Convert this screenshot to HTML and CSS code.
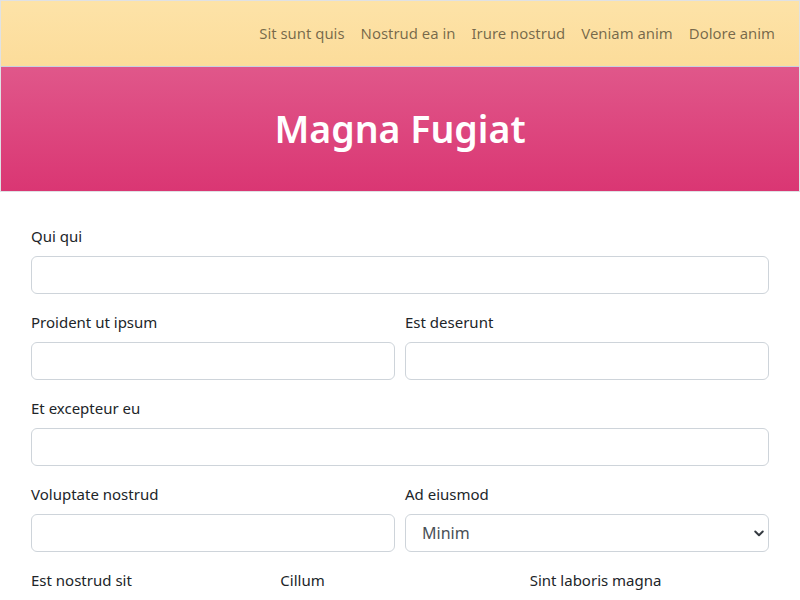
FILE: index.html
```html
<!DOCTYPE html>
<html lang="en">
<head>
<meta charset="utf-8">
<title>Magna Fugiat</title>
<link rel="stylesheet" href="styles.css">
</head>
<body>
<header class="top">
  <nav class="navbar">
    <ul class="nav">
      <li><a class="nav-link" href="#">Sit sunt quis</a></li>
      <li><a class="nav-link" href="#">Nostrud ea in</a></li>
      <li><a class="nav-link" href="#">Irure nostrud</a></li>
      <li><a class="nav-link" href="#">Veniam anim</a></li>
      <li><a class="nav-link" href="#">Dolore anim</a></li>
    </ul>
  </nav>
  <section class="hero">
    <h1 class="hero-title">Magna Fugiat</h1>
  </section>
</header>
<main class="content">
  <form class="form">
    <div class="field">
      <label class="label" for="f1">Qui qui</label>
      <input class="control" id="f1" type="text">
    </div>
    <div class="row two">
      <div class="field">
        <label class="label" for="f2">Proident ut ipsum</label>
        <input class="control" id="f2" type="text">
      </div>
      <div class="field">
        <label class="label" for="f3">Est deserunt</label>
        <input class="control" id="f3" type="text">
      </div>
    </div>
    <div class="field">
      <label class="label" for="f4">Et excepteur eu</label>
      <input class="control" id="f4" type="text">
    </div>
    <div class="row two">
      <div class="field">
        <label class="label" for="f5">Voluptate nostrud</label>
        <input class="control" id="f5" type="text">
      </div>
      <div class="field">
        <label class="label" for="f6">Ad eiusmod</label>
        <div class="select-wrap">
          <select class="control select" id="f6">
            <option>Minim</option>
          </select>
          <svg class="chev" viewBox="0 0 16 16" width="16" height="16" aria-hidden="true"><path d="M3 6l5 5 5-5" fill="none" stroke="#343a40" stroke-width="2.6" stroke-linecap="round" stroke-linejoin="round"/></svg>
        </div>
      </div>
    </div>
    <div class="row three">
      <div class="field">
        <label class="label" for="f7">Est nostrud sit</label>
        <input class="control" id="f7" type="text">
      </div>
      <div class="field">
        <label class="label" for="f8">Cillum</label>
        <input class="control" id="f8" type="text">
      </div>
      <div class="field">
        <label class="label" for="f9">Sint laboris magna</label>
        <input class="control" id="f9" type="text">
      </div>
    </div>
  </form>
</main>
</body>
</html>
```
FILE: styles.css
```css
* { box-sizing: border-box; }
html, body { margin: 0; padding: 0; }
body {
  font-family: "Noto Sans", "Open Sans", sans-serif;
  font-size: 15px;
  color: #212529;
  background: #fff;
}
.top {
  border: 1px solid #dfe1e4;
  border-bottom: none;
}
.navbar {
  background: linear-gradient(to bottom, #fde3a8, #fcdc9a);
  border-bottom: 1px solid #c9d0e0;
  padding: 12px 16px 13px;
  display: flex;
  justify-content: flex-end;
}
.nav {
  list-style: none;
  margin: 0;
  padding: 0;
  display: flex;
}
.nav-link {
  display: block;
  padding: 8px 8px;
  line-height: 24px;
  font-size: 14.9px;
  color: rgba(0, 0, 0, 0.55);
  text-decoration: none;
}
.hero {
  background: linear-gradient(to bottom, #e0578a, #da3673);
  border-bottom: 1px solid #dfe1e4;
  padding: 38px 16px;
  text-align: center;
}
.hero-title {
  margin: 0;
  color: #fff;
  font-size: 37.5px;
  font-weight: 600;
  line-height: 48px;
}
.content {
  padding: 32px 31px 0;
}
.form { margin: 0; }
.field { margin-bottom: 16px; min-width: 0; }
.row { display: grid; gap: 0 10px; }
.row.two { grid-template-columns: 1fr 1fr; }
.row.three { grid-template-columns: 1fr 1fr 1fr; }
.label {
  display: block;
  line-height: 24px;
  margin-bottom: 8px;
}
.control {
  display: block;
  width: 100%;
  height: 38px;
  padding: 6px 12px;
  font: inherit;
  font-size: 15px;
  color: #212529;
  background: #fff;
  border: 1px solid #ced4da;
  border-radius: 6px;
  appearance: none;
  -webkit-appearance: none;
}
.select-wrap { position: relative; }
.select { padding: 6px 36px 6px 16px; font-size: 16px; color: #495057; }
.chev {
  position: absolute;
  right: 4px;
  top: 13px;
  width: 12px;
  height: 12px;
  pointer-events: none;
}
```
